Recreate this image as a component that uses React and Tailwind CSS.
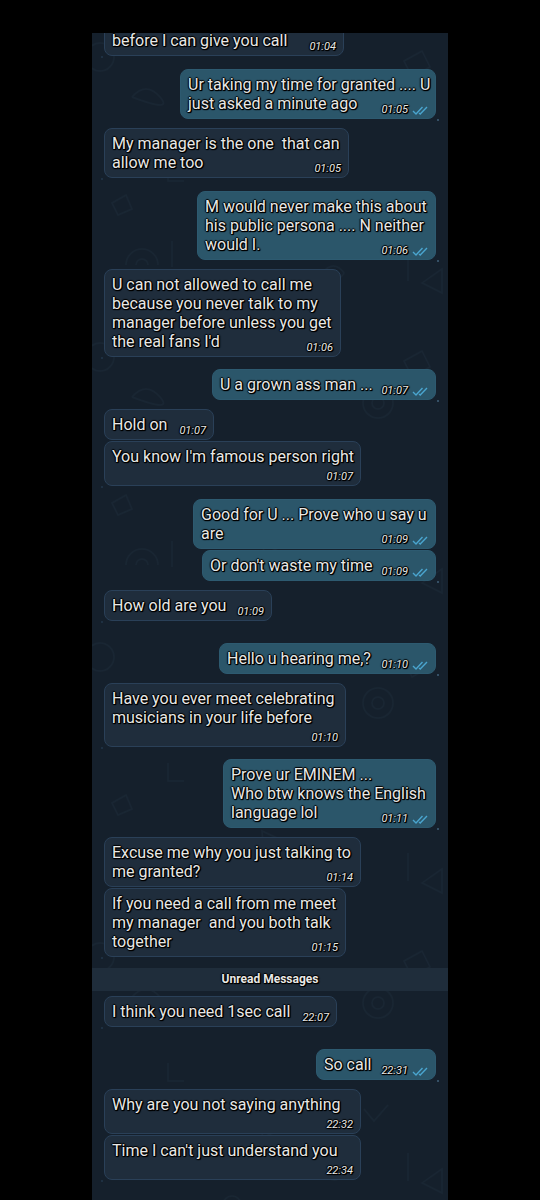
import React from "react";

const messages = [
  { text: "before I can give you call", time: "01:04", tail: true, size: "w-[240px]", gap: "-mt-2" },
  { text: "Ur taking my time for granted .... U\njust asked a minute ago", time: "01:05", out: true, tail: true, size: "w-[256px]", gap: "mt-[13px]" },
  { text: "My manager is the one  that can\nallow me too", time: "01:05", tail: true, size: "w-[245px]", gap: "mt-[9px]" },
  { text: "M would never make this about\nhis public persona .... N neither\nwould I.", time: "01:06", out: true, tail: true, size: "w-[239px]", gap: "mt-[13px]" },
  { text: "U can not allowed to call me\nbecause you never talk to my\nmanager before unless you get\nthe real fans I'd", time: "01:06", tail: true, size: "w-[237px]", gap: "mt-[9px]" },
  { text: "U a grown ass man ...", time: "01:07", out: true, tail: true, size: "w-[224px]", gap: "mt-[12px]" },
  { text: "Hold on", time: "01:07", size: "w-[110px]", gap: "mt-[9px]" },
  { text: "You know I'm famous person right", time: "01:07", below: true, tail: true, size: "w-[257px]", gap: "mt-[1px]" },
  { text: "Good for U ... Prove who u say u\nare", time: "01:09", out: true, size: "w-[243px]", gap: "mt-[13px]" },
  { text: "Or don't waste my time", time: "01:09", out: true, tail: true, size: "w-[234px]", gap: "mt-[1px]" },
  { text: "How old are you", time: "01:09", tail: true, size: "w-[168px]", gap: "mt-[9px]" },
  { text: "Hello u hearing me,?", time: "01:10", out: true, tail: true, size: "w-[217px]", gap: "mt-[22px]" },
  { text: "Have you ever meet celebrating\nmusicians in your life before", time: "01:10", below: true, tail: true, size: "w-[242px]", gap: "mt-[9px]" },
  { text: "Prove ur EMINEM ...\nWho btw knows the English\nlanguage lol", time: "01:11", out: true, tail: true, size: "w-[213px]", gap: "mt-[12px]" },
  { text: "Excuse me why you just talking to\nme granted?", time: "01:14", size: "w-[257px]", gap: "mt-[9px]" },
  { text: "If you need a call from me meet\nmy manager  and you both talk\ntogether", time: "01:15", tail: true, size: "w-[242px]", gap: "mt-[1px]" },
];

const unread = [
  { text: "I think you need 1sec call", time: "22:07", tail: true, size: "w-[233px]", gap: "mt-[5px]" },
  { text: "So call", time: "22:31", out: true, tail: true, size: "w-[120px]", gap: "mt-[22px]" },
  { text: "Why are you not saying anything", time: "22:32", below: true, size: "w-[257px]", gap: "mt-[9px]" },
  { text: "Time I can't just understand you", time: "22:34", below: true, tail: true, size: "w-[257px]", gap: "mt-[1px]" },
];

function Ticks() {
  return (
    <svg
      className="h-[9px] w-4"
      viewBox="0 0 16 9"
      fill="none"
      stroke="#4aa5cf"
      strokeWidth="1.4"
      aria-label="Read"
    >
      <path d="M1 5l3 3 6.5-7" />
      <path d="M7 7l1.2 1L15 1" />
    </svg>
  );
}

function Message({ text, time, out, below, tail, size, gap }) {
  const lines = text.split("\n");
  const last = below ? null : lines.pop();

  return (
    <li className={`flex ${out ? "justify-end" : "justify-start"} ${gap}`}>
      <div
        className={`relative max-w-full rounded-lg border px-[7px] pt-[5px] pb-px text-base leading-[19px] whitespace-pre ${size} ${
          out
            ? "border-[#2d5a70] bg-[#2b566a]"
            : "border-[#2a4058] bg-[#1f2d3c]"
        }`}
      >
        {lines.map((line) => (
          <p key={line}>{line}</p>
        ))}
        <div className={`flex items-end ${below ? "justify-end pt-1" : "justify-between"}`}>
          {last && <p className="pb-1">{last}</p>}
          <div className="flex items-center gap-1 text-[11px] leading-[14px] italic">
            <time>{time}</time>
            {out && <Ticks />}
          </div>
        </div>
        {tail && (
          <span
            className={`absolute -bottom-[3px] size-0.5 rounded-full ${
              out ? "-right-1 bg-[#41617a]" : "-left-1 bg-[#22364a]"
            }`}
          />
        )}
      </div>
    </li>
  );
}

function Wallpaper() {
  return (
    <svg className="absolute inset-0 h-full w-full" aria-hidden="true">
      <defs>
        <pattern id="doodles" width="356" height="300" patternUnits="userSpaceOnUse">
          <g fill="none" stroke="#192633" strokeWidth="1.5">
            <circle cx="8" cy="24" r="14" />
            <circle cx="286" cy="70" r="15" />
            <circle cx="286" cy="70" r="6" />
            <path d="M312 28l18-10 8 16-18 10z" />
            <path d="M40 64q14-16 28 0t-28 0" />
            <path d="M76 130v18h16" />
            <path d="M20 170l14-8 6 14-14 6z" />
            <path d="M272 176l10 12 14-16" />
            <path d="M170 198l26 12-24 12z" />
            <path d="M34 232a16 16 0 0132 0M44 232a6 6 0 0112 0" />
            <path d="M80 208v26" />
            <path d="M230 240q12-14 22 0q-8 14-22 0" />
            <path d="M316 220v28M330 250l20-14v24z" />
            <circle cx="140" cy="272" r="9" />
          </g>
        </pattern>
      </defs>
      <rect width="100%" height="100%" fill="url(#doodles)" />
    </svg>
  );
}

export default function App() {
  return (
    <div className="flex min-h-screen flex-col bg-black pt-[33px] font-[Roboto,sans-serif]">
      <main className="relative mx-auto w-full max-w-[356px] flex-1 overflow-hidden bg-[#15202c] text-[#e8e8e6] [text-shadow:1px_0_1px_#000,-1px_0_1px_#000,0_1px_1px_#000,0_-1px_1px_#000,1px_1px_0_#000,1px_1px_1px_#000]">
        <Wallpaper />
        <div className="relative">
          <ul className="px-3">
            {messages.map((m, i) => (
              <Message key={i} {...m} />
            ))}
          </ul>
          <h2 className="mt-[11px] bg-[#1f2d3b] text-center text-xs leading-[23px] font-bold">
            Unread Messages
          </h2>
          <ul className="px-3">
            {unread.map((m, i) => (
              <Message key={i} {...m} />
            ))}
          </ul>
        </div>
      </main>
    </div>
  );
}
